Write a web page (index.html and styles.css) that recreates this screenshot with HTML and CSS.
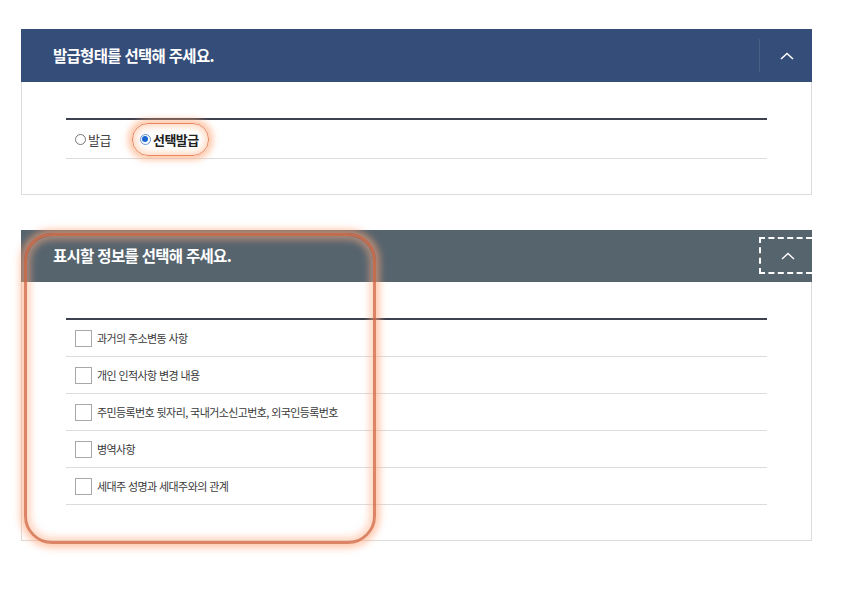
FILE: index.html
```html
<!DOCTYPE html>
<html lang="ko">
<head>
<meta charset="utf-8">
<title>발급형태 선택</title>
<link rel="stylesheet" href="styles.css">
</head>
<body>
<div class="page">
  <section class="panel">
    <div class="panel-head head-navy">
      <h2 class="panel-title">발급형태를 선택해 주세요.</h2>
      <button class="toggle toggle-divided" type="button" aria-label="접기">
        <svg width="14" height="8" viewBox="0 0 14 8"><path d="M1 7 L7 1.5 L13 7" fill="none" stroke="#fff" stroke-width="1.6"/></svg>
      </button>
    </div>
    <div class="panel-body">
      <div class="table">
        <div class="row radio-row">
          <label class="radio-item"><span class="radio"></span><span class="radio-text">발급</span></label>
          <label class="radio-item selected"><span class="radio checked"></span><span class="radio-text">선택발급</span></label>
        </div>
      </div>
    </div>
  </section>

  <section class="panel panel-second">
    <div class="panel-head head-slate">
      <h2 class="panel-title">표시할 정보를 선택해 주세요.</h2>
      <button class="toggle toggle-focus" type="button" aria-label="접기">
        <svg width="14" height="8" viewBox="0 0 14 8"><path d="M1 7 L7 1.5 L13 7" fill="none" stroke="#fff" stroke-width="1.4"/></svg>
      </button>
    </div>
    <div class="panel-body">
      <div class="table">
        <div class="row check-row"><span class="checkbox"></span><span class="check-text">과거의 주소변동 사항</span></div>
        <div class="row check-row"><span class="checkbox"></span><span class="check-text">개인 인적사항 변경 내용</span></div>
        <div class="row check-row"><span class="checkbox"></span><span class="check-text">주민등록번호 뒷자리, 국내거소신고번호, 외국인등록번호</span></div>
        <div class="row check-row"><span class="checkbox"></span><span class="check-text">병역사항</span></div>
        <div class="row check-row"><span class="checkbox"></span><span class="check-text">세대주 성명과 세대주와의 관계</span></div>
      </div>
    </div>
  </section>

  <div class="highlight-box"></div>
</div>
</body>
</html>
```

FILE: styles.css
```css
* { box-sizing: border-box; }

html, body {
  margin: 0;
  padding: 0;
  background: #fff;
}

body {
  font-family: "Noto Sans CJK KR", "Noto Sans", sans-serif;
  color: #333;
}

.page {
  position: relative;
  width: 860px;
  height: 603px;
  padding: 29px 0 0 21px;
}

.panel {
  width: 791px;
}

.panel-second {
  margin-top: 35px;
}

.panel-head {
  height: 53px;
  display: flex;
  align-items: center;
  justify-content: space-between;
  padding-left: 32px;
}

.head-navy { background: #344d79; }
.head-slate { background: #56646e; }

.panel-second .panel-head {
  height: 52px;
}

.panel-title {
  margin: 0;
  color: #fff;
  font-size: 15.5px;
  font-weight: 700;
  letter-spacing: -0.7px;
  line-height: 1;
}

.toggle {
  width: 53px;
  height: 37px;
  margin: 0;
  padding: 0;
  background: transparent;
  border: 0;
  display: flex;
  align-items: center;
  justify-content: center;
  padding-left: 2px;
}

.toggle-divided {
  height: 33px;
  border-left: 1px solid rgba(255, 255, 255, 0.1);
}

.toggle-focus {
  border: 2px dashed #fff;
  border-right-width: 0;
  margin-bottom: 1px;
}

.panel-body {
  border: 1px solid #dcdcdc;
  border-top: 0;
  padding: 36px 44px 35px 44px;
}

.panel-second .panel-body {
  padding-top: 36px;
}

.table {
  border-top: 2px solid #3d4150;
}

.row {
  border-bottom: 1px solid #dcdcdc;
  display: flex;
  align-items: center;
}

.radio-row {
  height: 39px;
  padding-left: 9px;
  gap: 21px;
}

.radio-item {
  display: flex;
  align-items: center;
  gap: 2px;
  font-size: 13px;
  color: #444;
  letter-spacing: -0.5px;
}

.radio-item.selected {
  height: 33px;
  padding: 0 9px 0 7px;
  margin-left: 0;
  border-radius: 16px;
  border: 1px solid #e8875f;
  box-shadow: 0 0 6px 4px rgba(255, 165, 115, 0.6), inset 0 0 6px 3px rgba(255, 185, 145, 0.55);
}

.radio-item.selected .radio-text {
  font-weight: 700;
  color: #222;
}

.radio {
  width: 11px;
  height: 11px;
  border: 1px solid #777;
  border-radius: 50%;
  background: #fff;
  position: relative;
}

.radio.checked {
  border-color: #6a93cf;
}

.radio.checked::after {
  content: "";
  position: absolute;
  left: 1.5px;
  top: 1.5px;
  width: 6px;
  height: 6px;
  border-radius: 50%;
  background: #1a66d0;
}

.check-row {
  height: 37px;
  padding-left: 9px;
  gap: 5px;
}

.checkbox {
  width: 17px;
  height: 17px;
  border: 1px solid #a8a8a8;
  background: #fff;
  flex: none;
}

.check-text {
  font-size: 11px;
  color: #3a3a3a;
  letter-spacing: -0.6px;
}

.highlight-box {
  position: absolute;
  left: 24px;
  top: 233px;
  width: 352px;
  height: 311px;
  border: 3px solid rgba(214, 110, 75, 0.85);
  border-radius: 28px;
  box-shadow: 0 0 7px 4px rgba(255, 165, 120, 0.6), inset 0 0 7px 4px rgba(255, 175, 135, 0.5);
  pointer-events: none;
}
```
